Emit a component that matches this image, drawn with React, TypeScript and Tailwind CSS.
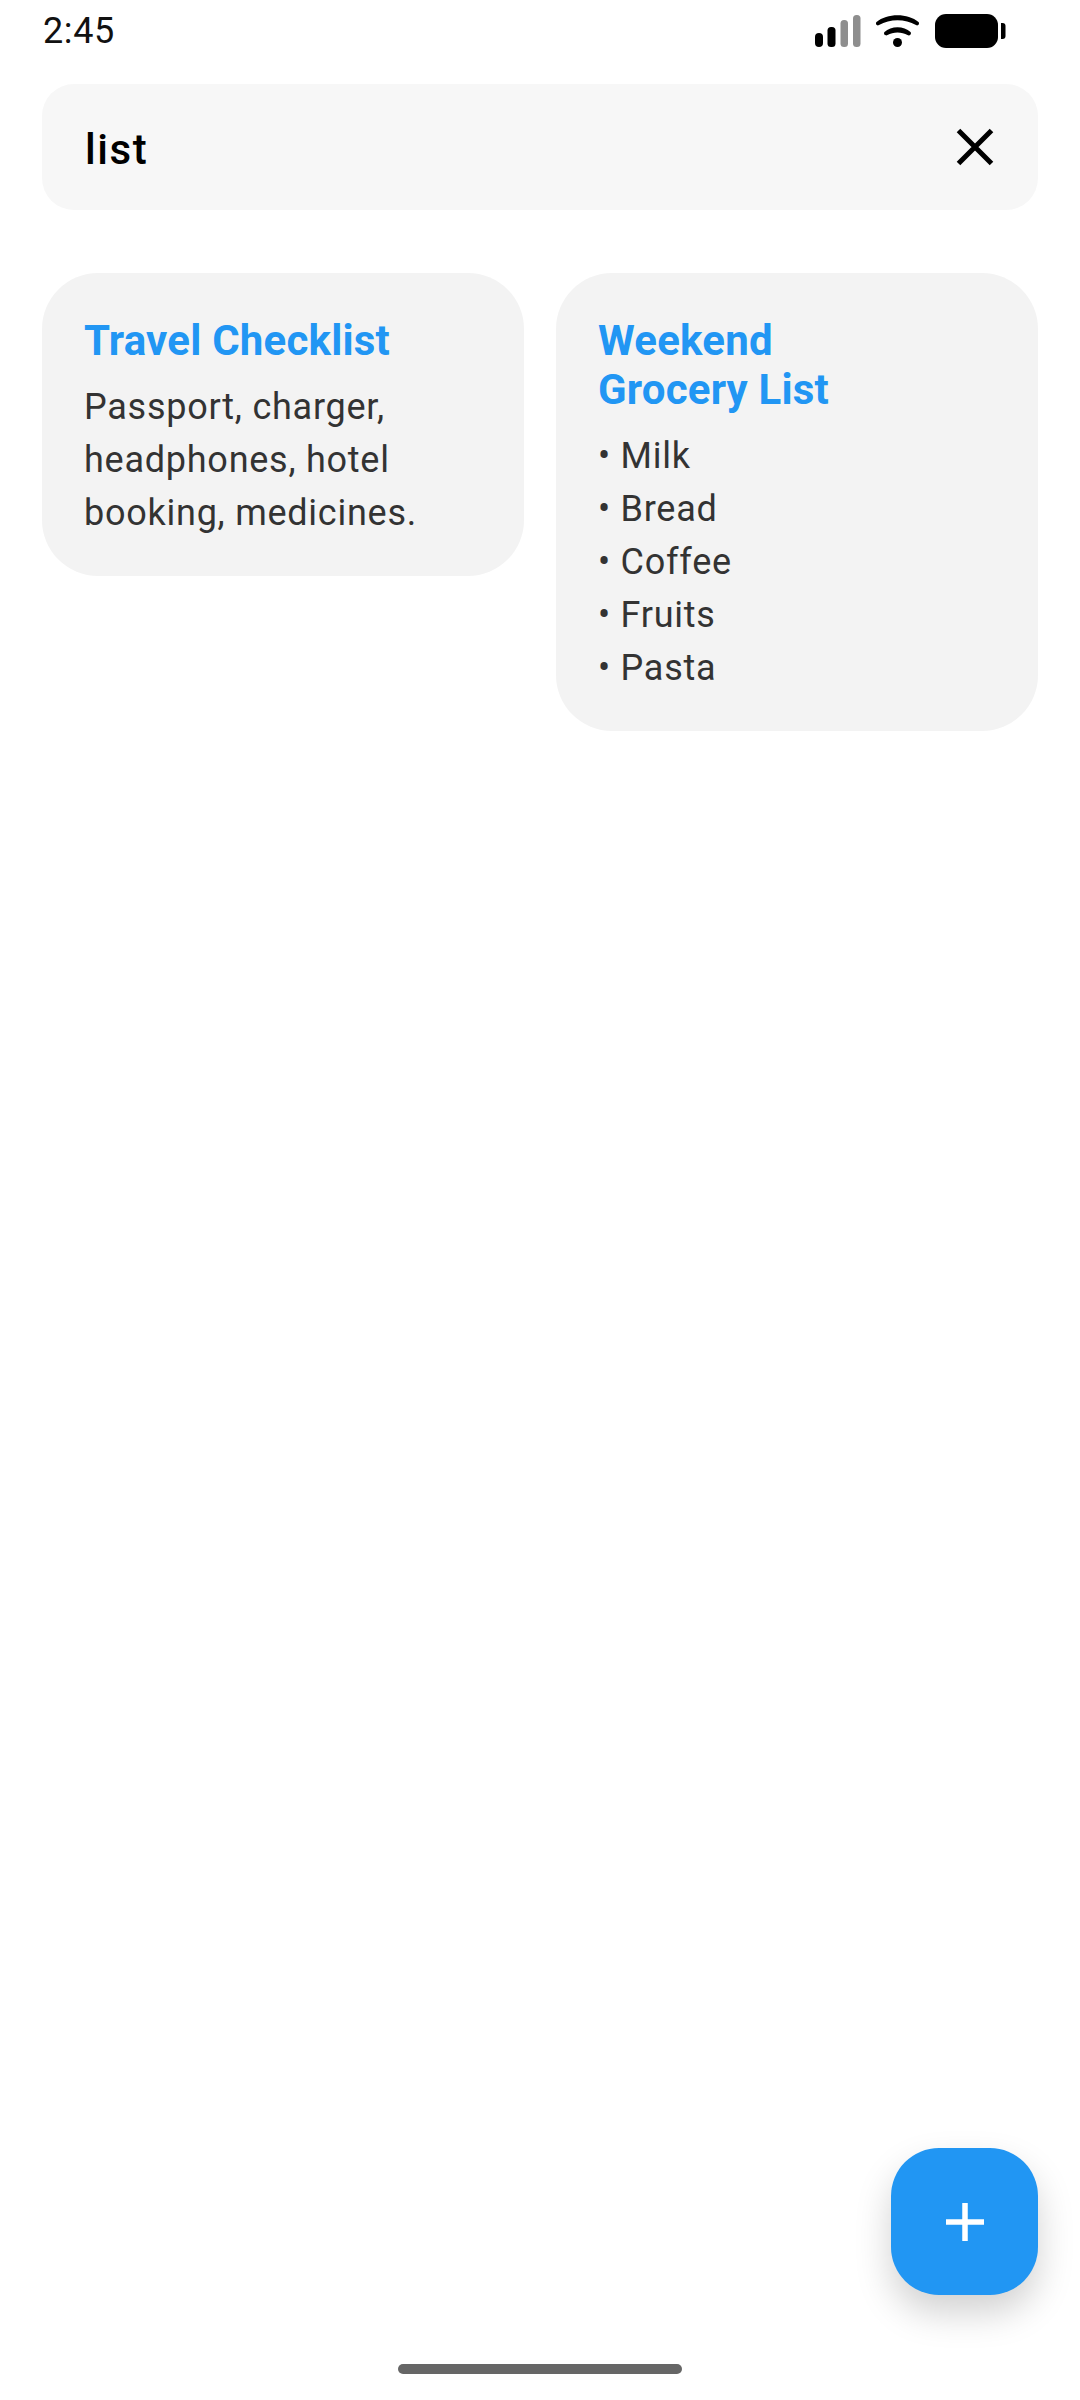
export default function App() {
  const items = ["Milk", "Bread", "Coffee", "Fruits", "Pasta"];
  return (
    <div className="relative flex h-[2400px] w-[1080px] flex-col overflow-hidden bg-white font-['Roboto',sans-serif]">
      <div className="flex h-[84px] shrink-0 items-start justify-between">
        <span className="ml-[43px] mt-[10px] text-[36px] leading-[42px] tracking-[0.6px] text-[#111111]">2:45</span>
        <svg className="mr-[70px] mt-[13px]" width="195" height="36" viewBox="0 0 195 36">
          <rect x="0" y="20" width="8" height="14" rx="4" fill="#000" />
          <rect x="12.5" y="14" width="8" height="20" rx="3.5" fill="#000" />
          <rect x="25.5" y="7" width="7.5" height="27" rx="3.5" fill="#8e8e8e" />
          <rect x="38" y="2" width="7.5" height="32" rx="3.5" fill="#8e8e8e" />
          <path d="M61.5 9 C72 0 93 0 103.5 9 C105 10.5 103 13.5 101 12 C90 5.5 75 5.5 64 12 C62 13.5 60 10.5 61.5 9 Z" fill="#000" />
          <path d="M69.5 19 C76 12.5 89 12.5 95.5 19 C97 21 94.5 23.5 92.5 22 C87 18.5 78 18.5 72.5 22 C70.5 23.5 68 21 69.5 19 Z" fill="#000" />
          <circle cx="82.5" cy="29.5" r="4.5" fill="#000" />
          <rect x="120" y="1" width="63" height="34" rx="11" fill="#000" />
          <path d="M186 10 h1.5 a3 3 0 0 1 3 3 v10 a3 3 0 0 1 -3 3 h-1.5 z" fill="#000" />
        </svg>
      </div>

      <div className="mx-[42px] flex h-[126px] shrink-0 items-center justify-between rounded-[32px] bg-[#f7f7f7] pl-[43px] pr-[42px]">
        <span className="mt-[6px] text-[42px] font-medium leading-[48px] tracking-[1.6px] text-black">list</span>
        <svg width="38" height="38" viewBox="0 0 38 38" className="mr-[2px]">
          <path d="M2.5 2.5 L35.5 35.5 M35.5 2.5 L2.5 35.5" stroke="#000" strokeWidth="5" fill="none" />
        </svg>
      </div>

      <div className="mx-[42px] mt-[63px] grid grid-cols-[482px_482px] items-start gap-[32px]">
        <div className="rounded-[56px] bg-[#f3f3f3] px-[42px] pb-[36px] pt-[43px]">
          <h2 className="text-[42px] font-bold leading-[49px] tracking-[0.2px] text-[#2196f3]">Travel Checklist</h2>
          <p className="mt-[16px] text-[36px] leading-[53px] tracking-[0.75px] text-[#333333]">
            Passport, charger,
            <br />
            headphones, hotel
            <br />
            booking, medicines.
          </p>
        </div>
        <div className="rounded-[56px] bg-[#f3f3f3] px-[42px] pb-[36px] pt-[43px]">
          <h2 className="text-[42px] font-bold leading-[49px] tracking-[0.2px] text-[#2196f3]">
            Weekend
            <br />
            Grocery List
          </h2>
          <ul className="mt-[16px] text-[36px] leading-[53px] tracking-[0.75px] text-[#333333]">
            {items.map((item) => (
              <li key={item}>• {item}</li>
            ))}
          </ul>
        </div>
      </div>

      <button className="absolute left-[891px] top-[2148px] flex h-[147px] w-[147px] items-center justify-center rounded-[48px] bg-[#2196f3] shadow-[0_18px_36px_rgba(0,0,0,0.18)]">
        <svg width="38" height="38" viewBox="0 0 38 38">
          <path d="M19 0 V38 M0 19 H38" stroke="#fff" strokeWidth="5.5" fill="none" />
        </svg>
      </button>

      <div className="absolute bottom-[26px] left-[398px] h-[10px] w-[284px] rounded-full bg-[#666666]" />
    </div>
  );
}
